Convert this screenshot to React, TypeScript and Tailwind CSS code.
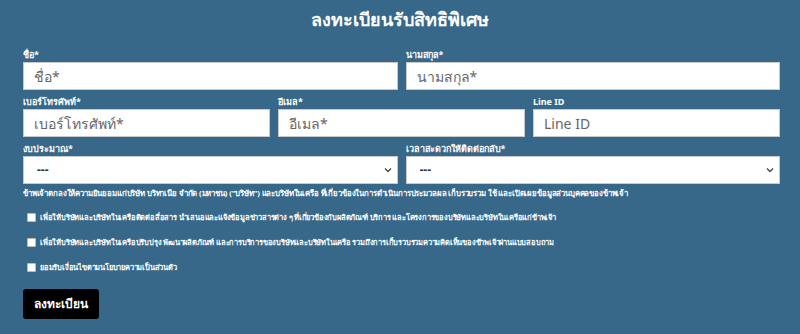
import React from 'react'

const labelCls = 'block text-[9px] leading-[12px] font-bold text-white mb-[1px]'
const inputCls =
  'w-full h-[28px] bg-white border border-[#c9c9c9] px-[10px] text-[14px] text-[#333] placeholder:text-[#666] outline-none'

const Field = ({ label, placeholder }: { label: string; placeholder: string }) => (
  <div className="flex flex-col">
    <label className={labelCls}>{label}</label>
    <input className={inputCls} placeholder={placeholder} />
  </div>
)

const SelectField = ({ label }: { label: string }) => (
  <div className="flex flex-col">
    <label className={labelCls}>{label}</label>
    <div className="relative">
      <select className="w-full h-[28px] appearance-none bg-white border border-[#c9c9c9] pl-[13px] text-[12px] font-bold text-[#333] outline-none">
        <option>---</option>
      </select>
      <svg
        className="absolute right-[6px] top-[11px] pointer-events-none"
        width="8"
        height="6"
        viewBox="0 0 8 6"
      >
        <path d="M1 1.5 L4 4.5 L7 1.5" stroke="#444" strokeWidth="1.3" fill="none" />
      </svg>
    </div>
  </div>
)

const Check = ({ text }: { text: string }) => (
  <label className="flex items-center gap-[4px] pl-[4px] text-[7.5px] leading-[12px] font-bold text-white tracking-[-0.2px]">
    <span className="w-[9px] h-[9px] bg-white border border-[#bbb] rounded-[1px] shrink-0" />
    {text}
  </label>
)

export default function App() {
  return (
    <div
      className="w-[800px] h-[334px] bg-[#386889] overflow-hidden"
      style={{ fontFamily: '"Noto Sans", "Open Sans", sans-serif' }}
    >
      <h1 className="text-center text-white text-[18px] font-bold leading-[26px] pt-[6px]">
        ลงทะเบียนรับสิทธิพิเศษ
      </h1>
      <form className="pl-[23px] pr-[20px] pt-[17px] flex flex-col">
        <div className="grid grid-cols-2 gap-x-[8px]">
          <Field label="ชื่อ*" placeholder="ชื่อ*" />
          <Field label="นามสกุล*" placeholder="นามสกุล*" />
        </div>
        <div className="grid grid-cols-3 gap-x-[8px] mt-[6px]">
          <Field label="เบอร์โทรศัพท์*" placeholder="เบอร์โทรศัพท์*" />
          <Field label="อีเมล*" placeholder="อีเมล*" />
          <Field label="Line ID" placeholder="Line ID" />
        </div>
        <div className="grid grid-cols-2 gap-x-[8px] mt-[6px]">
          <SelectField label="งบประมาณ*" />
          <SelectField label="เวลาสะดวกให้ติดต่อกลับ*" />
        </div>
        <p className="text-[7.8px] leading-[12px] font-bold text-white mt-[3px] tracking-[-0.15px]">
          ข้าพเจ้าตกลงให้ความยินยอมแก่บริษัท บริทาเนีย จำกัด (มหาชน) ("บริษัท") และบริษัทในเครือ ที่เกี่ยวข้องในการดำเนินการประมวลผล เก็บรวบรวม ใช้ และเปิดเผยข้อมูลส่วนบุคคลของข้าพเจ้า
        </p>
        <div className="flex flex-col gap-[13px] mt-[12px]">
          <Check text="เพื่อให้บริษัทและบริษัทในเครือติดต่อสื่อสาร นำเสนอและแจ้งข้อมูลข่าวสารต่าง ๆ ที่เกี่ยวข้องกับผลิตภัณฑ์ บริการ และโครงการของบริษัทและบริษัทในเครือแก่ข้าพเจ้า" />
          <Check text="เพื่อให้บริษัทและบริษัทในเครือปรับปรุง พัฒนาผลิตภัณฑ์ และการบริการของบริษัทและบริษัทในเครือ รวมถึงการเก็บรวบรวมความคิดเห็นของข้าพเจ้าผ่านแบบสอบถาม" />
          <Check text="ยอมรับเงื่อนไขตามนโยบายความเป็นส่วนตัว" />
        </div>
        <div className="mt-[16px]">
          <button
            type="button"
            className="bg-black text-white text-[12px] font-bold h-[30px] px-[11px] rounded-[3px] leading-[30px]"
          >
            ลงทะเบียน
          </button>
        </div>
      </form>
    </div>
  )
}
